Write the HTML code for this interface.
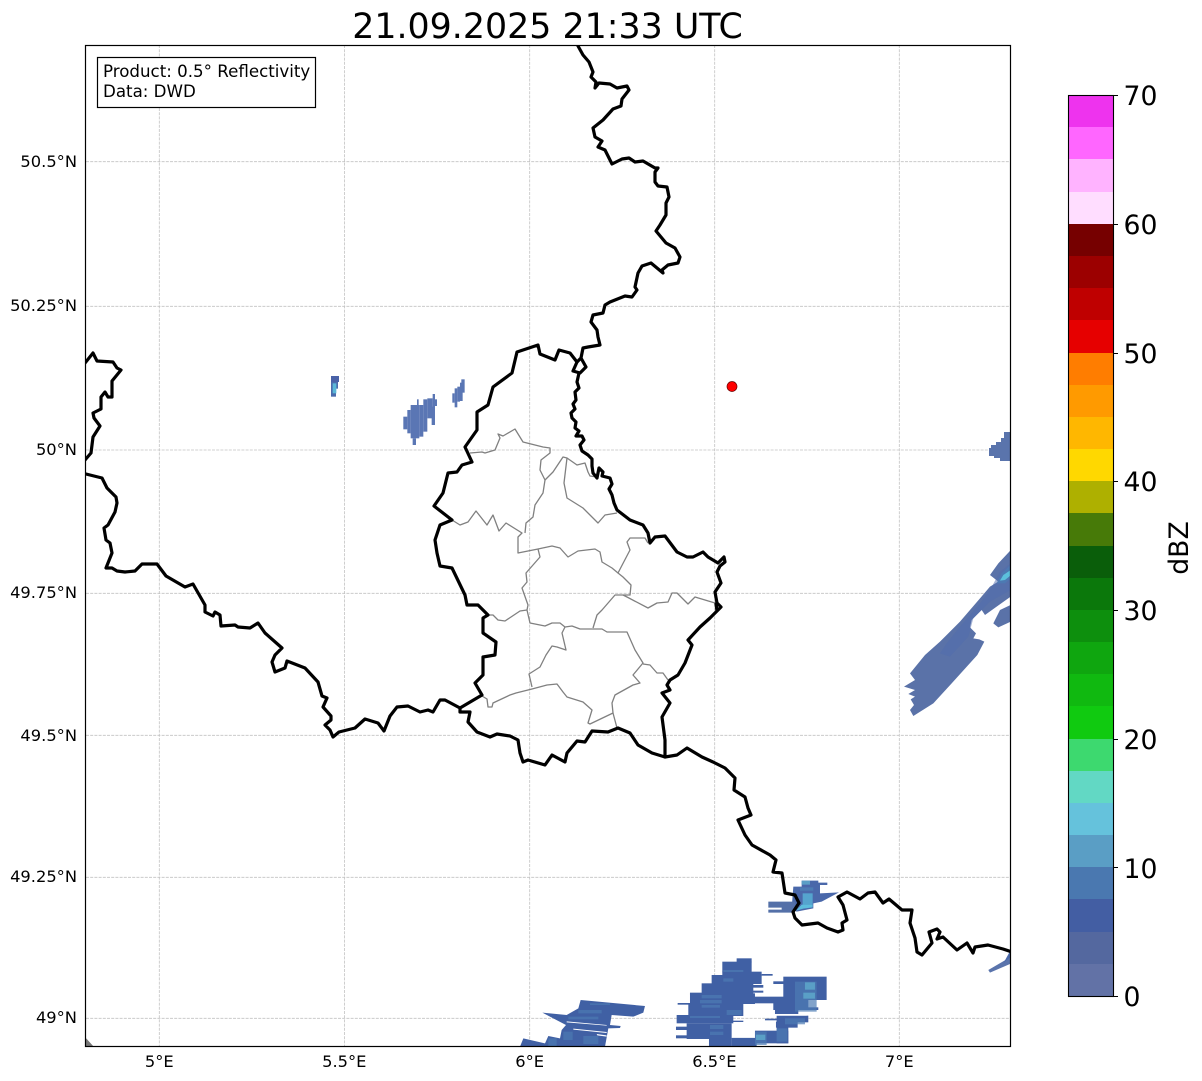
<!DOCTYPE html>
<html><head><meta charset="utf-8"><style>
html,body{margin:0;padding:0;background:#fff}
svg{display:block}
text{font-family:"DejaVu Sans",sans-serif;fill:#000}
.t{font-size:16.3px}
.p{font-size:16.67px}
.c{font-size:26.67px}
.g{stroke:#c2c2c2;stroke-width:.8;stroke-dasharray:3 1.2;fill:none}
.b{fill:none;stroke:#000;stroke-width:3.2;stroke-linejoin:round;stroke-linecap:round}
.i{fill:none;stroke:#808080;stroke-width:1.3;stroke-linejoin:round}
</style></head><body>
<svg width="1202" height="1081" viewBox="0 0 1202 1081" xmlns="http://www.w3.org/2000/svg">
<rect width="1202" height="1081" fill="#fff"/>
<defs><clipPath id="ax"><rect x="86" y="45.500" width="924" height="1001"/></clipPath></defs>
<text x="547.500" y="38" font-size="34.800" text-anchor="middle">21.09.2025 21:33 UTC</text>

<g clip-path="url(#ax)">
<!-- grid -->
<path class="g" d="M159.300 45V1046M344.600 45V1046M529.700 45V1046M714.700 45V1046M899.300 45V1046M86 161.700H1010M86 306.300H1010M86 450H1010M86 593.300H1010M86 735.300H1010M86 877.300H1010M86 1018.300H1010"/>

<!-- radar small NW -->
<g transform="translate(320,370) scale(.3333)">
<rect x="33" y="18" width="24" height="18" fill="#4a62a8"/>
<rect x="33" y="36" width="15" height="44" fill="#4a6cac"/>
<rect x="48" y="36" width="6" height="20" fill="#4a6cac"/>
<rect x="38" y="40" width="11" height="30" fill="#5ab8d8"/>
<g fill="#5a76b4">
<rect x="250" y="140" width="12" height="38"/>
<rect x="262" y="120" width="10" height="70"/>
<rect x="272" y="105" width="26" height="100"/>
<rect x="278" y="205" width="10" height="20"/>
<rect x="291" y="88" width="5" height="20"/>
<rect x="298" y="105" width="12" height="95"/>
<rect x="310" y="88" width="12" height="97"/>
<rect x="322" y="85" width="16" height="60"/>
<rect x="338" y="72" width="7" height="40"/>
<rect x="345" y="88" width="6" height="20"/>
<rect x="335" y="110" width="10" height="55"/>
<rect x="397" y="70" width="7" height="28"/>
<rect x="404" y="55" width="8" height="57"/>
<rect x="412" y="50" width="8" height="45"/>
<rect x="420" y="38" width="8" height="55"/>
<rect x="424" y="28" width="10" height="40"/>
</g>
</g>

<!-- right edge 50N -->
<path fill="#5a74ac" d="M1011 432H1004V438H1001V442H996V445H991V448H989V456H994V458H1000V461H1011Z"/>

<!-- NE band -->
<g transform="translate(890,540) scale(.3333)">
<path fill="#5a72a8" d="M362 30L358 35 325 70 300 105 325 125 300 140 270 175 210 245 150 305 105 345 60 400 75 420 42 440 75 450 55 462 75 470 62 478 72 495 60 510 70 528 130 490 185 430 262 345 283 305 268 298 250 295 258 280 240 262 245 240 275 210 285 225 320 200 362 170Z"/>
<path fill="#4f6cae" d="M362 70L330 95 300 150 270 190 210 260 170 310 150 340 180 350 235 290 250 235 300 185 362 150Z" opacity=".5"/>
<path fill="#4d79b2" d="M362 75L335 100 320 130 345 130 362 115Z"/>
<path fill="#5cc0dc" d="M362 90L340 105 330 122 345 120 362 106Z"/>
<path fill="#5a72a8" d="M362 195L330 210 310 250 325 262 362 245Z"/>
</g>

<!-- Saar blob + SE -->
<g transform="translate(740,860) scale(.3333)">
<path fill="#4a68aa" d="M185 62H235V68H262V75H240V100L297 97 245 125 220 130V145L170 155 155 145 160 80H185Z"/>
<path fill="#5470a8" d="M85 125H165V158H85V149H125V143H85Z"/>
<rect x="185" y="62" width="25" height="12" fill="#5a9fc6"/>
<rect x="188" y="100" width="30" height="34" fill="#55a4ce"/>
<path fill="#5cbcdc" d="M168 152L185 134 218 134 218 142 190 146Z"/>
<rect x="180" y="82" width="40" height="10" fill="#4d7cb4"/>
<path fill="#5a74ac" d="M745 330L810 292V312L750 338Z"/>
<path fill="#4a68aa" d="M790 310L815 265V290L800 300Z"/>
</g>

<!-- bottom-left grey -->
<path fill="#777" d="M85 1037L94 1047H85Z"/>

<!-- southern radar -->
<g transform="translate(510,950) scale(.3333)">
<path fill="#4060a4" d="M30 290L40 265 105 280 115 258 150 265 155 240 168 225 97 188 170 195 205 175 212 150 405 168 400 188 370 200 305 195 300 225 332 228 330 234 295 235 285 290Z"/>
<g fill="#4d7cb4" opacity=".65">
<rect x="205" y="180" width="70" height="10"/>
<rect x="175" y="200" width="90" height="8"/>
<rect x="160" y="245" width="28" height="25"/>
<rect x="220" y="258" width="45" height="24"/>
<rect x="115" y="265" width="25" height="23"/>
<rect x="240" y="160" width="60" height="5"/>
</g>
<path fill="#fff" d="M190 236L290 246 290 249 190 239ZM260 252L290 256 290 260 262 256ZM170 214L290 225 290 227 170 217Z"/>

<g fill="#4060a4">
<rect x="680" y="25" width="45" height="12"/>
<rect x="637" y="35" width="88" height="32"/>
<rect x="637" y="65" width="118" height="12"/>
<rect x="605" y="75" width="150" height="27"/>
<rect x="575" y="100" width="155" height="32"/>
<rect x="540" y="130" width="195" height="32"/>
<rect x="535" y="160" width="165" height="38"/>
<rect x="500" y="195" width="170" height="25"/>
<rect x="530" y="220" width="135" height="47"/>
<rect x="498" y="230" width="40" height="10"/>
<rect x="498" y="256" width="40" height="9"/>
<rect x="503" y="159" width="40" height="5"/>
<rect x="540" y="128" width="40" height="6"/>
<rect x="597" y="262" width="68" height="28"/>
<rect x="665" y="262" width="75" height="26"/>
<rect x="735" y="242" width="100" height="38"/>
<rect x="800" y="230" width="35" height="50"/>
<rect x="725" y="140" width="105" height="20"/>
<rect x="755" y="72" width="33" height="5"/>
<rect x="725" y="105" width="35" height="8"/>
<rect x="725" y="122" width="35" height="6"/>
<rect x="790" y="94" width="35" height="8"/>
<rect x="820" y="80" width="130" height="70"/>
<rect x="790" y="150" width="105" height="30"/>
<rect x="795" y="178" width="70" height="14"/>
<rect x="800" y="197" width="95" height="20"/>
<rect x="798" y="215" width="65" height="18"/>
<rect x="765" y="206" width="40" height="5"/>
<rect x="665" y="212" width="35" height="4"/>
<rect x="880" y="172" width="45" height="8"/>
</g>
<g fill="#4d7cb4" opacity=".7">
<rect x="575" y="135" width="60" height="10"/>
<rect x="570" y="150" width="65" height="10"/>
<rect x="575" y="165" width="55" height="8"/>
<rect x="640" y="85" width="30" height="10"/>
<rect x="855" y="95" width="65" height="90"/>
<rect x="825" y="205" width="60" height="18"/>
<rect x="735" y="245" width="35" height="40"/>
<rect x="800" y="235" width="32" height="40"/>
<rect x="600" y="225" width="40" height="12"/>
<rect x="600" y="245" width="40" height="10"/>
<rect x="650" y="180" width="45" height="15"/>
<rect x="540" y="198" width="90" height="6"/>
<rect x="640" y="60" width="60" height="6"/>
</g>
<g fill="#5a9fc6">
<rect x="885" y="97" width="30" height="22"/>
<rect x="880" y="128" width="35" height="18"/>
<rect x="738" y="254" width="28" height="16"/>
</g>
<g fill="#fff">
<rect x="665" y="262" width="70" height="2"/>
<rect x="790" y="192" width="100" height="5"/>
</g>
</g>

<!-- district lines -->
<path class="i" d="M470 453L482 452 485 453 495 450 500 438 498 434 503 436 515 429 523 442 535 445 543 447 550 448 550 453 541 460 540 470 545 480 543 493 535 505 533 517 526 523 525 533"/>
<path class="i" d="M452 520L460 525 468 522 476 511 487 525 493 515 499 531 506 523 522 533 518 537 518 553 538 549 552 546 560 548 568 557 578 551 595 549 600 552 602 562 612 568 618 573 630 550 627 542 630 538 645 538 648 543"/>
<path class="i" d="M545 480L553 472 563 457 567 458 564 483 567 498 583 508 598 523 605 515 617 513"/>
<path class="i" d="M567 458L577 465 585 463 588 472 590 476 597 477"/>
<path class="i" d="M538 549L540 557 526 573 527 582 522 588 528 605 527 610 530 623 545 626 552 623 560 623 565 627 572 626 580 629 592 629 602 629 607 632 627 632 635 650 643 663 633 675 640 683 633 685 615 695 612 703 613 713 590 724 588 723 592 710 583 702 567 697 563 692 557 684 547 685 532 689 516 693 510 695 493 703 492 707 488 707 487 699 482 696"/>
<path class="i" d="M527 610L520 611 505 621 498 620 493 615 488 615"/>
<path class="i" d="M618 573L623 577 631 585 630 595 615 595 602 610 597 615 593 628"/>
<path class="i" d="M623 595L627 597 648 608 657 603 668 602 672 593 677 593 688 604 695 597 715 603"/>
<path class="i" d="M565 627L562 633 566 650 557 647 552 646 546 655 540 667 529 674 532 687"/>
<path class="i" d="M643 664L650 665 657 673 663 673 668 680"/>
<path class="i" d="M613 713L617 728"/>

<!-- national borders -->
<path class="b" d="M578 46L583 55 589 62 593 72 591 77 596 82 595 88 599 83 610 84 617 88 627 86 629 90 622 99 621 106 613 109 603 120 593 128 595 137 602 141 598 147 605 150 612 164 622 159 629 158 635 162 643 161 655 168 658 168 655 172 655 182 658 186 667 187 669 197 666 203 666 215 660 225 656 231 666 243 675 248 680 257 678 263 668 265 662 270 663 273 651 263 642 266 638 273 635 287 637 290 632 297 625 296 610 302 605 305 603 313 593 315 591 322 597 330 598 337 600 345 588 347 583 348 581 358 586 367 580 373 573 371 577 362 581 358"/>
<path class="b" d="M579 373L577 382 579 388 575 392 576 400 573 404 575 409 571 413 572 418 576 422 575 428 579 431 576 436 582 436 584 440 580 445 582 451 588 455 592 459 592 466 593 473 597 478 599 468 603 472 602 476 610 478 612 484 609 489 612 495 614 503 617 510 630 520 643 525 648 533 650 543 655 537 665 536 677 552 687 557 693 557 703 552 708 557 718 563 724 557 725 562 720 566 717 572 721 583 715 592 717 603 721 607 717 611 716 604 717 611 710 618 700 627 688 640 692 645 685 663 678 675 670 680 667 685 670 690 662 693 670 703 662 717 665 740 665 757"/>
<path class="b" d="M577 362L570 353 559 350 555 360 540 354 538 345 517 352 512 373 493 387 488 405 477 412 477 430 465 447 472 462 462 465 457 472 448 473 443 493 434 506 452 520 440 525 435 540 437 553 440 566 452 568 465 595 467 605 478 605 488 615 483 618 483 633 496 642 495 655 483 657 483 675 475 683 482 695 460 708"/>
<path class="b" d="M86 474L102 478 107 488 116 497 117 503 115 512 108 525 104 528 106 540 110 543 112 553 106 568 112 568 117 571 125 572 135 571 142 564 157 564 166 576 185 587 193 584 205 605 205 612 213 616 215 612 220 615 221 626 235 625 238 627 250 628 258 623 265 633 282 648 275 655 272 662 275 672 285 668 287 661 305 668 318 682 322 696 327 698 323 707 331 716 331 720 325 725 330 730 333 737 339 732 355 728 365 719 378 723 384 731 390 716 397 707 408 706 420 712 428 710 433 712 440 700 445 700 460 708 460 712 470 712 468 722 477 732 490 737 497 734 510 736 518 740 520 753 523 762 528 760 545 765 552 755 565 762 567 753 577 741 585 742 592 731 608 732 618 728 630 733 638 745 652 753 665 757 677 755 687 748 702 757 713 762 725 768 735 778 734 790 745 797 748 808 751 815 738 820 745 835 752 845 770 855 776 860 773 872 782 873 785 893 795 895 799 903 793 912 795 918 802 925 818 923 827 928 838 932 843 930 842 923 847 920 843 905 838 897 847 892 860 899 868 893 875 892 883 903 889 899 902 910 912 910 910 923 915 938 917 952 922 955 932 943 929 932 937 929 940 932 937 939 943 937 957 950 967 943 973 953 975 947 988 945 1003 949 1012 952"/>
<path class="b" d="M85 363L93 353 97 361 113 362 117 368 121 370 112 381 112 397 108 397 105 392 101 397 101 409 93 413 94 418 100 426 93 437 91 453 85 460"/>

<circle cx="732" cy="386.500" r="5" fill="#f00" stroke="#600" stroke-width=".7"/>
</g>

<!-- info box -->
<rect x="97.500" y="57.500" width="218" height="50" fill="#fff" stroke="#000" stroke-width="1.200"/>
<text class="p" x="103" y="77">Product: 0.5° Reflectivity</text>
<text class="p" x="103" y="97">Data: DWD</text>

<!-- axes frame -->
<rect x="85.500" y="45.500" width="925" height="1001" fill="none" stroke="#000" stroke-width="1.200"/>

<!-- axis labels -->
<g class="t" text-anchor="end">
<text x="77" y="167">50.5°N</text>
<text x="77" y="311">50.25°N</text>
<text x="77" y="455">50°N</text>
<text x="77" y="598">49.75°N</text>
<text x="77" y="741">49.5°N</text>
<text x="77" y="882">49.25°N</text>
<text x="77" y="1023">49°N</text>
</g>
<g class="t" text-anchor="middle">
<text x="159.300" y="1067">5°E</text>
<text x="344.300" y="1067">5.5°E</text>
<text x="529.700" y="1067">6°E</text>
<text x="714.400" y="1067">6.5°E</text>
<text x="899.300" y="1067">7°E</text>
</g>

<!-- colorbar -->
<g shape-rendering="crispEdges">
<rect x="1068" y="964" width="45" height="32" fill="#6272a6"/>
<rect x="1068" y="932" width="45" height="32" fill="#54689f"/>
<rect x="1068" y="899" width="45" height="33" fill="#435ea3"/>
<rect x="1068" y="867" width="45" height="32" fill="#4a78b0"/>
<rect x="1068" y="835" width="45" height="32" fill="#5a9ec5"/>
<rect x="1068" y="803" width="45" height="32" fill="#65c2dc"/>
<rect x="1068" y="771" width="45" height="32" fill="#62d8c4"/>
<rect x="1068" y="739" width="45" height="32" fill="#3dd96f"/>
<rect x="1068" y="706" width="45" height="33" fill="#10ca10"/>
<rect x="1068" y="674" width="45" height="32" fill="#10b910"/>
<rect x="1068" y="642" width="45" height="32" fill="#0fa60f"/>
<rect x="1068" y="610" width="45" height="32" fill="#0d8f0d"/>
<rect x="1068" y="578" width="45" height="32" fill="#0b780b"/>
<rect x="1068" y="546" width="45" height="32" fill="#0a5e0a"/>
<rect x="1068" y="513" width="45" height="33" fill="#477a08"/>
<rect x="1068" y="481" width="45" height="32" fill="#aeb000"/>
<rect x="1068" y="449" width="45" height="32" fill="#ffd800"/>
<rect x="1068" y="417" width="45" height="32" fill="#ffb700"/>
<rect x="1068" y="385" width="45" height="32" fill="#ff9a00"/>
<rect x="1068" y="353" width="45" height="32" fill="#ff7d00"/>
<rect x="1068" y="320" width="45" height="33" fill="#e60000"/>
<rect x="1068" y="288" width="45" height="32" fill="#bf0000"/>
<rect x="1068" y="256" width="45" height="32" fill="#9c0000"/>
<rect x="1068" y="224" width="45" height="32" fill="#760000"/>
<rect x="1068" y="192" width="45" height="32" fill="#ffddff"/>
<rect x="1068" y="159" width="45" height="33" fill="#ffb3ff"/>
<rect x="1068" y="127" width="45" height="32" fill="#ff66ff"/>
<rect x="1068" y="95" width="45" height="32" fill="#ee33ee"/>
</g>
<rect x="1068.500" y="95.500" width="45" height="901" fill="none" stroke="#000" stroke-width="1.100"/>
<path d="M1113 95.500h5M1113 224.500h5M1113 353.500h5M1113 481.500h5M1113 610.500h5M1113 739.500h5M1113 867.500h5M1113 996.500h5" stroke="#000" stroke-width="1" fill="none"/>
<g class="c">
<text x="1123.500" y="105">70</text>
<text x="1123.500" y="234">60</text>
<text x="1123.500" y="363">50</text>
<text x="1123.500" y="491">40</text>
<text x="1123.500" y="620">30</text>
<text x="1123.500" y="749">20</text>
<text x="1123.500" y="878">10</text>
<text x="1123.500" y="1006">0</text>
</g>
<text class="c" transform="translate(1188,548) rotate(-90)" text-anchor="middle">dBZ</text>
</svg>
</body></html>
